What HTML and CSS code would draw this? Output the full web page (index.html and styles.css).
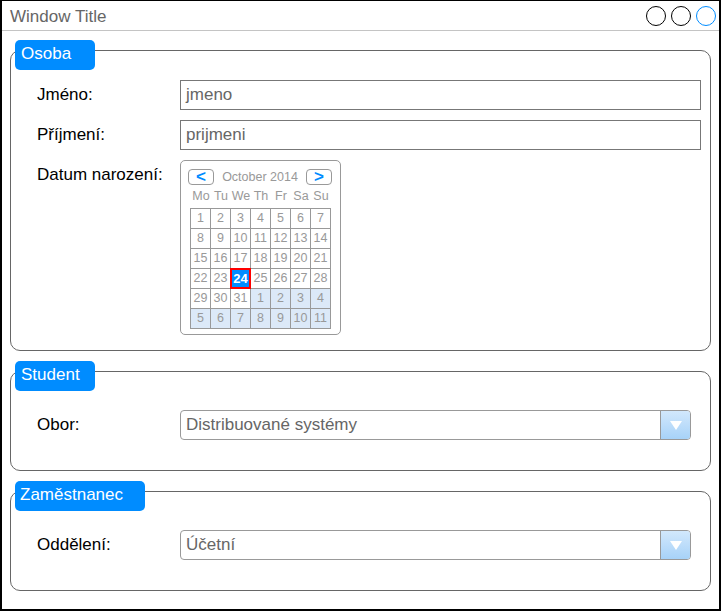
FILE: index.html
```html
<!DOCTYPE html>
<html lang="cs">
<head>
<meta charset="utf-8">
<title>Window</title>
<link rel="stylesheet" href="styles.css">
</head>
<body>
<div class="window">
  <div class="titlebar">
    <span class="title">Window Title</span>
    <div class="controls">
      <span class="ctl"></span>
      <span class="ctl"></span>
      <span class="ctl ctl-active"></span>
    </div>
  </div>
  <div class="content">
    <section class="group group-osoba">
      <div class="tab">Osoba</div>
      <div class="form-row">
        <span class="label">Jméno:</span>
        <div class="input">jmeno</div>
      </div>
      <div class="form-row">
        <span class="label">Příjmení:</span>
        <div class="input">prijmeni</div>
      </div>
      <div class="form-row form-row-top">
        <span class="label">Datum narození:</span>
        <div class="calendar">
          <div class="cal-head">
            <span class="cal-btn">&lt;</span>
            <span class="cal-month">October 2014</span>
            <span class="cal-btn">&gt;</span>
          </div>
          <div class="cal-days">
            <span>Mo</span><span>Tu</span><span>We</span><span>Th</span><span>Fr</span><span>Sa</span><span>Su</span>
          </div>
          <div class="cal-grid">
            <span>1</span><span>2</span><span>3</span><span>4</span><span>5</span><span>6</span><span>7</span>
            <span>8</span><span>9</span><span>10</span><span>11</span><span>12</span><span>13</span><span>14</span>
            <span>15</span><span>16</span><span>17</span><span>18</span><span>19</span><span>20</span><span>21</span>
            <span>22</span><span>23</span><span class="sel">24</span><span>25</span><span>26</span><span>27</span><span>28</span>
            <span>29</span><span>30</span><span>31</span><span class="next">1</span><span class="next">2</span><span class="next">3</span><span class="next">4</span>
            <span class="next">5</span><span class="next">6</span><span class="next">7</span><span class="next">8</span><span class="next">9</span><span class="next">10</span><span class="next">11</span>
          </div>
        </div>
      </div>
    </section>

    <section class="group group-select">
      <div class="tab">Student</div>
      <div class="form-row">
        <span class="label">Obor:</span>
        <div class="select">
          <span class="select-text">Distribuované systémy</span>
          <span class="select-btn"><span class="arrow"></span></span>
        </div>
      </div>
    </section>

    <section class="group group-select">
      <div class="tab tab-wide">Zaměstnanec</div>
      <div class="form-row">
        <span class="label">Oddělení:</span>
        <div class="select">
          <span class="select-text">Účetní</span>
          <span class="select-btn"><span class="arrow"></span></span>
        </div>
      </div>
    </section>
  </div>
</div>
</body>
</html>
```

FILE: styles.css
```css
* { box-sizing: border-box; }

html, body {
  margin: 0;
  padding: 0;
  background: #fff;
}

body {
  font-family: "Liberation Sans", Arial, sans-serif;
  font-size: 17px;
  color: #000;
}

.window {
  width: 721px;
  height: 611px;
  border: 2px solid #000;
  border-top-width: 1px;
  background: #fff;
}

.titlebar {
  height: 30px;
  border-bottom: 1px solid #c4c4c4;
  display: flex;
  align-items: center;
  justify-content: space-between;
  padding: 0 3px 0 8px;
}

.title {
  color: #666;
  font-size: 17px;
  line-height: 29px;
  padding-top: 1px;
}

.controls {
  display: flex;
  gap: 5px;
  margin-top: 1px;
}

.ctl {
  width: 20px;
  height: 20px;
  border: 1px solid #000;
  border-radius: 50%;
  background: #fff;
}

.ctl-active {
  border-color: #008cff;
}

.content {
  padding: 19px 8px 0 8px;
  display: flex;
  flex-direction: column;
  gap: 20px;
}

.group {
  position: relative;
  border: 1px solid #666;
  border-radius: 10px;
}

.group-osoba {
  padding: 29px 9px 15px 26px;
  display: flex;
  flex-direction: column;
  gap: 10px;
}

.group-select {
  padding: 38px 19px 30px 26px;
}

.tab {
  position: absolute;
  top: -11px;
  left: 4px;
  width: 80px;
  height: 30px;
  background: #008cff;
  color: #fff;
  border-radius: 5px;
  font-size: 17px;
  line-height: 27px;
  padding-left: 6px;
  white-space: nowrap;
}

.tab-wide {
  width: 130px;
  padding-left: 5px;
}

.form-row {
  display: grid;
  grid-template-columns: 143px 1fr;
  align-items: center;
}

.form-row-top {
  align-items: start;
}

.label {
  line-height: 30px;
  font-size: 17px;
  color: #000;
}

.input {
  height: 30px;
  border: 1px solid #777;
  color: #666;
  font-size: 17px;
  line-height: 27px;
  padding-left: 5px;
}

/* Calendar */
.calendar {
  width: 161px;
  height: 175px;
  border: 1px solid #999;
  border-radius: 5px;
  padding: 8px 9px 5px 9px;
}

.cal-head {
  display: flex;
  align-items: center;
  justify-content: space-between;
  height: 16px;
  margin: 0 -1px 0 -2px;
}

.cal-btn {
  width: 26px;
  height: 16px;
  border: 1px solid #999;
  border-radius: 4px;
  color: #008cff;
  font-weight: bold;
  font-size: 17px;
  line-height: 13px;
  text-align: center;
}

.cal-month {
  color: #999;
  font-size: 12.5px;
  line-height: 16px;
}

.cal-days {
  display: grid;
  grid-template-columns: repeat(7, 20px);
  height: 23px;
  margin-left: 1px;
}

.cal-days span {
  color: #999;
  font-size: 12.5px;
  line-height: 22px;
  text-align: center;
}

.cal-grid {
  display: grid;
  grid-template-columns: repeat(7, 19px);
  grid-auto-rows: 19px;
  gap: 1px;
  width: 141px;
  border: 1px solid #999;
  background: #999;
}

.cal-grid span {
  background: #fff;
  color: #999;
  font-size: 12.5px;
  line-height: 19px;
  text-align: center;
}

.cal-grid .next {
  background: #dce9f8;
}

.cal-grid .sel {
  background: #008cff;
  color: #fff;
  font-weight: bold;
  font-size: 13px;
  box-shadow: 0 0 0 1px #f00, inset 0 0 0 1px #f00;
}

/* Select */
.select {
  display: flex;
  height: 30px;
  border: 1px solid #999;
  border-radius: 4px;
}

.select-text {
  flex: 1;
  color: #666;
  font-size: 17px;
  line-height: 27px;
  padding-left: 5px;
}

.select-btn {
  width: 30px;
  border-left: 1px solid #999;
  border-radius: 0 3px 3px 0;
  background: linear-gradient(to bottom, #d2e8fc, #a7d2f8);
  display: flex;
  align-items: center;
  justify-content: center;
}

.arrow {
  width: 0;
  height: 0;
  border-left: 6px solid transparent;
  border-right: 6px solid transparent;
  border-top: 9px solid #fff;
  margin-top: 1px;
}
```
